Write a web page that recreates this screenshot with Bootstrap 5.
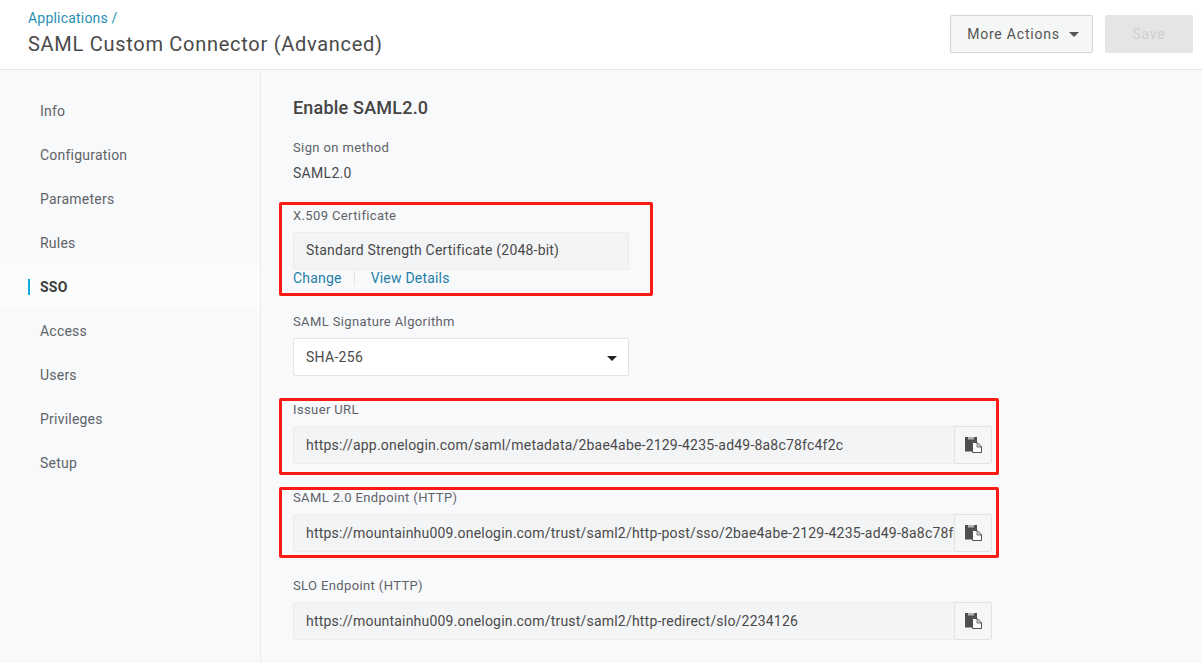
<!DOCTYPE html>
<html lang="en">

<head>
    <meta charset="UTF-8">
    <meta name="viewport" content="width=device-width, initial-scale=1.0">
    <title>SAML Custom Connector (Advanced)</title>
    <link href="https://cdn.jsdelivr.net/npm/bootstrap@5.3.0/dist/css/bootstrap.min.css" rel="stylesheet">
    <style>
        html, body {
            height: 663px;
            overflow: hidden;
        }

        body {
            font-family: Roboto, "Liberation Sans", sans-serif;
            font-size: 14px;
            color: #4a4a4a;
            background: #f8f9fb;
        }

        /* Header */
        .app-top {
            height: 70px;
            background: #fff;
            border-bottom: 1px solid #e6e7e8;
            padding: 0 9px 0 28px;
        }

        .crumb-link {
            display: block;
            color: #1f8fb3;
            text-decoration: none;
            font-size: 14px;
            line-height: 20px;
            margin-top: 8px;
            letter-spacing: .2px;
        }

        .app-title {
            font-size: 20px;
            font-weight: 400;
            line-height: 30px;
            letter-spacing: .72px;
            color: #4a4a4a;
            margin: 1px 0 0;
        }

        .top-actions {
            padding-top: 15px;
        }

        .btn-more {
            width: 143px;
            height: 38px;
            background: #f5f6f6;
            border: 1px solid #d3d4d4;
            border-radius: 2px;
            color: #555;
            font-size: 14px;
            letter-spacing: .8px;
            padding: 0 0 0 3px;
        }

        .btn-more::after {
            margin-left: 9px;
            vertical-align: 2px;
            border-top-width: 5px;
            border-left-width: 5px;
            border-right-width: 5px;
        }

        .btn-save {
            width: 88px;
            height: 38px;
            background: #e5e5e5;
            border: 0;
            border-radius: 2px;
            color: #cfcfcf;
            font-size: 14px;
            letter-spacing: .8px;
            padding: 0;
        }

        .btn-save:disabled {
            background: #e5e5e5;
            color: #cfcfcf;
            opacity: 1;
        }

        /* Sidebar */
        .side-col {
            width: 261px;
            height: 593px;
            border-right: 1px solid #eceded;
            padding-top: 19px;
            flex: none;
        }

        .side-link {
            display: flex;
            align-items: center;
            height: 44px;
            padding-left: 40px;
            color: #5f6368;
            text-decoration: none;
            font-size: 14px;
            letter-spacing: .22px;
            position: relative;
        }

        .side-link.is-active {
            background: #fbfcfc;
            color: #3d3d3d;
            font-weight: 700;
        }

        .side-link.is-active::before {
            content: "";
            position: absolute;
            left: 28px;
            top: 14px;
            width: 2px;
            height: 16px;
            background: #10a9e0;
        }

        /* Form */
        .main-col {
            padding: 26px 0 0 32px;
        }

        .sec-title {
            font-size: 18px;
            font-weight: 500;
            line-height: 24px;
            letter-spacing: .2px;
            color: #444;
            margin: 0 0 18px;
        }

        .fld-label {
            display: block;
            font-size: 13px;
            line-height: 20px;
            letter-spacing: .38px;
            color: #5f6368;
            margin: 0;
        }

        .fld-static {
            line-height: 20px;
            margin-top: 5px;
            letter-spacing: .3px;
        }

        .fld-group {
            position: relative;
        }

        .fld-box {
            height: 38px;
            background: #f3f4f5;
            border: 1px solid #ebecec;
            border-radius: 2px;
            padding: 0 12px;
            line-height: 36px;
            letter-spacing: .2px;
            color: #4a4a4a;
            white-space: nowrap;
            overflow: hidden;
        }

        .cert-group .fld-box {
            line-height: 34px;
        }

        .narrow-w {
            width: 336px;
        }

        .wide-w {
            width: 699px;
        }

        .fld-select {
            height: 38px;
            background: #fff;
            border: 1px solid #e3e4e5;
            border-radius: 2px;
            padding: 0 12px;
            letter-spacing: .3px;
        }

        .sel-caret {
            width: 0;
            height: 0;
            border-top: 5px solid #222;
            border-left: 5px solid transparent;
            border-right: 5px solid transparent;
            margin-top: 3px;
            margin-right: -1px;
        }

        .copy-btn {
            width: 38px;
            height: 38px;
            flex: none;
            background: #f5f6f6;
            border: 1px solid #e1e2e2;
            border-radius: 2px;
            padding: 0;
            margin-left: -1px;
        }

        .copy-btn svg {
            display: block;
            margin: -1px auto 0;
        }

        .cert-links {
            height: 16px;
        }

        .cert-links a {
            color: #1f7fa8;
            text-decoration: none;
            letter-spacing: .2px;
            line-height: 16px;
        }

        .cert-links a + a {
            border-left: 1px solid #e3e4e5;
            margin-left: 12px;
            padding-left: 16px;
        }

        /* vertical rhythm between fields, taken from the picture */
        .cert-group { margin-top: 23px; }
        .cert-group .fld-label { margin-bottom: 6px; }
        .algo-group { margin-top: 26px; }
        .algo-group .fld-label { margin-bottom: 6px; }
        .url-group { margin-top: 24px; }
        .url-group .fld-label { margin-bottom: 6px; }

        /* Red annotation frames drawn on top of the screenshot */
        .red-frame {
            position: absolute;
            border: 3px solid #fb1a14;
            border-radius: 2px;
            pointer-events: none;
        }

        .frame-cert { left: -14px; top: -4px; width: 374px; height: 94px; }
        .frame-issuer { left: -14px; top: -2px; width: 720px; height: 77px; }
        .frame-saml { left: -14px; top: -1px; width: 720px; height: 71px; }
    </style>
</head>

<body>
    <header class="app-top d-flex justify-content-between">
        <div>
            <a class="crumb-link" href="#">Applications /</a>
            <h1 class="app-title">SAML Custom Connector (Advanced)</h1>
        </div>
        <div class="top-actions d-flex gap-2 align-items-start">
            <button class="btn btn-more dropdown-toggle" type="button">More Actions</button>
            <button class="btn btn-save ms-1" type="button" disabled>Save</button>
        </div>
    </header>

    <div class="d-flex">
        <nav class="side-col">
            <a class="side-link" href="#">Info</a>
            <a class="side-link" href="#">Configuration</a>
            <a class="side-link" href="#">Parameters</a>
            <a class="side-link" href="#">Rules</a>
            <a class="side-link is-active" href="#">SSO</a>
            <a class="side-link" href="#">Access</a>
            <a class="side-link" href="#">Users</a>
            <a class="side-link" href="#">Privileges</a>
            <a class="side-link" href="#">Setup</a>
        </nav>

        <main class="main-col flex-grow-1">
            <h2 class="sec-title">Enable SAML2.0</h2>

            <div class="fld-group">
                <span class="fld-label">Sign on method</span>
                <div class="fld-static">SAML2.0</div>
            </div>

            <div class="fld-group cert-group">
                <label class="fld-label">X.509 Certificate</label>
                <div class="fld-box narrow-w">Standard Strength Certificate (2048-bit)</div>
                <div class="cert-links d-flex align-items-center">
                    <a href="#">Change</a><a href="#">View Details</a>
                </div>
                <div class="red-frame frame-cert"></div>
            </div>

            <div class="fld-group algo-group">
                <label class="fld-label">SAML Signature Algorithm</label>
                <div class="fld-select narrow-w d-flex align-items-center justify-content-between">
                    <span>SHA-256</span><span class="sel-caret"></span>
                </div>
            </div>

            <div class="fld-group url-group">
                <label class="fld-label">Issuer URL</label>
                <div class="d-flex wide-w">
                    <div class="fld-box flex-grow-1">https://app.onelogin.com/saml/metadata/2bae4abe-2129-4235-ad49-8a8c78fc4f2c</div>
                    <button class="copy-btn" type="button" aria-label="Copy">
                        <svg width="17" height="16" viewBox="0 0 17 16"><path fill="#4f4f4f" d="M0 0h12v5H7v9.500H0z"/><path fill="#b5b5b5" d="M3 0h6v2.500H3z"/><path fill="#fff" stroke="#4f4f4f" d="M7.500 5.500h4.500l4.500 4.500v5.500h-9z"/><path fill="#e6e6e6" stroke="#4f4f4f" stroke-width=".8" d="M12 5.500v4.500h4.500z"/></svg>
                    </button>
                </div>
                <div class="red-frame frame-issuer"></div>
            </div>

            <div class="fld-group url-group">
                <label class="fld-label">SAML 2.0 Endpoint (HTTP)</label>
                <div class="d-flex wide-w">
                    <div class="fld-box flex-grow-1">https://mountainhu009.onelogin.com/trust/saml2/http-post/sso/2bae4abe-2129-4235-ad49-8a8c78fc4f2c</div>
                    <button class="copy-btn" type="button" aria-label="Copy">
                        <svg width="17" height="16" viewBox="0 0 17 16"><path fill="#4f4f4f" d="M0 0h12v5H7v9.500H0z"/><path fill="#b5b5b5" d="M3 0h6v2.500H3z"/><path fill="#fff" stroke="#4f4f4f" d="M7.500 5.500h4.500l4.500 4.500v5.500h-9z"/><path fill="#e6e6e6" stroke="#4f4f4f" stroke-width=".8" d="M12 5.500v4.500h4.500z"/></svg>
                    </button>
                </div>
                <div class="red-frame frame-saml"></div>
            </div>

            <div class="fld-group url-group">
                <label class="fld-label">SLO Endpoint (HTTP)</label>
                <div class="d-flex wide-w">
                    <div class="fld-box flex-grow-1">https://mountainhu009.onelogin.com/trust/saml2/http-redirect/slo/2234126</div>
                    <button class="copy-btn" type="button" aria-label="Copy">
                        <svg width="17" height="16" viewBox="0 0 17 16"><path fill="#4f4f4f" d="M0 0h12v5H7v9.500H0z"/><path fill="#b5b5b5" d="M3 0h6v2.500H3z"/><path fill="#fff" stroke="#4f4f4f" d="M7.500 5.500h4.500l4.500 4.500v5.500h-9z"/><path fill="#e6e6e6" stroke="#4f4f4f" stroke-width=".8" d="M12 5.500v4.500h4.500z"/></svg>
                    </button>
                </div>
            </div>
        </main>
    </div>
</body>

</html>
